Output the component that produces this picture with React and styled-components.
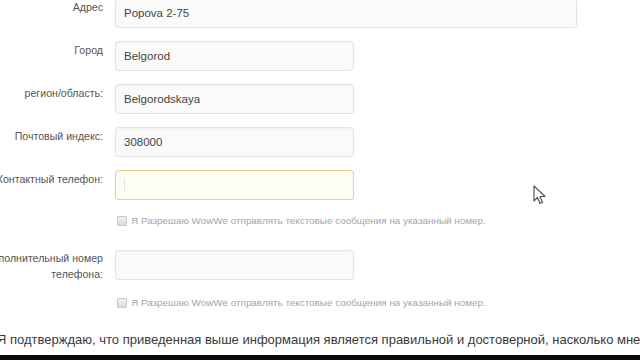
import styled, { createGlobalStyle } from "styled-components";

const GlobalStyle = createGlobalStyle`
  html, body {
    margin: 0;
    padding: 0;
    background: #fff;
    overflow: hidden;
  }
  body {
    font-family: "Liberation Sans", Arial, sans-serif;
  }
`;

const Screen = styled.div`
  position: relative;
  width: 640px;
  height: 360px;
  overflow: hidden;
  background: #fff;
  display: flex;
  flex-direction: column;
`;

const Form = styled.div`
  display: grid;
  grid-template-columns: 163px 1fr;
  column-gap: 12px;
  row-gap: 13px;
  margin-left: -60px;
  margin-top: -2px;
`;

const Label = styled.div`
  font-size: 10.6px;
  line-height: ${(p) => (p.$tall ? "16px" : "13px")};
  color: #555;
  text-align: right;
  white-space: nowrap;
  padding-top: ${(p) => (p.$tall ? "0" : "3px")};
`;

const Input = styled.div`
  box-sizing: border-box;
  height: 30px;
  width: ${(p) => (p.$wide ? "462px" : "239px")};
  border: 1px solid ${(p) => (p.$focus ? "#e4d291" : "#e4e4e4")};
  border-radius: 3px;
  background: ${(p) => (p.$focus ? "#fffef6" : "#fafafa")};
  box-shadow: inset 0 1px 2px rgba(0, 0, 0, 0.04);
  display: flex;
  align-items: center;
  padding-left: 8px;
  font-size: 11.5px;
  color: #444;
`;

const Caret = styled.span`
  width: 1px;
  height: 12px;
  background: #e2e2e2;
`;

const CheckRow = styled.label`
  grid-column: 2;
  display: flex;
  align-items: center;
  gap: 4px;
  margin-left: 2px;
  margin-top: 2px;
  margin-bottom: 11px;
  font-size: 9.9px;
  color: #a5a5a5;
  white-space: nowrap;
`;

const Box = styled.span`
  box-sizing: border-box;
  width: 10px;
  height: 10px;
  border: 1px solid #c8c8c8;
  background: linear-gradient(#f0f0f0, #dcdcdc);
  border-radius: 1px;
`;

const Confirm = styled.p`
  margin: 13px 0 0 -3px;
  font-size: 13px;
  color: #3a3a3a;
  white-space: nowrap;
`;

const BottomBar = styled.div`
  margin-top: auto;
  height: 5px;
  background: #0a0a0a;
`;

const Cursor = styled.svg`
  position: absolute;
  left: 533px;
  top: 185px;
`;

function Field({ label, value, wide, focus, tall }) {
  return (
    <>
      <Label $tall={tall}>{label}</Label>
      <Input $wide={wide} $focus={focus}>
        {focus ? <Caret /> : value}
      </Input>
    </>
  );
}

function Consent() {
  return (
    <CheckRow>
      <Box />Я Разрешаю WowWe отправлять текстовые сообщения на указанный номер.
    </CheckRow>
  );
}

export default function App() {
  return (
    <Screen>
      <GlobalStyle />
      <Form>
        <Field label="Адрес" value="Popova 2-75" wide />
        <Field label="Город" value="Belgorod" />
        <Field label="регион/область:" value="Belgorodskaya" />
        <Field label="Почтовый индекс:" value="308000" />
        <Field label="Контактный телефон:" focus />
        <Consent />
        <Field
          tall
          label={
            <>
              Дополнительный номер
              <br />
              телефона:
            </>
          }
        />
        <Consent />
      </Form>
      <Confirm>
        Я подтверждаю, что приведенная выше информация является правильной и достоверной, насколько мне известно.
      </Confirm>
      <BottomBar />
      <Cursor width="14" height="20" viewBox="0 0 14 20">
        <path d="M1 1 L1 16 L4.5 12.5 L7 18.5 L9.5 17.5 L7 11.5 L12 11.5 Z" fill="#fff" stroke="#555" strokeWidth="1.2" strokeLinejoin="round" />
      </Cursor>
    </Screen>
  );
}
